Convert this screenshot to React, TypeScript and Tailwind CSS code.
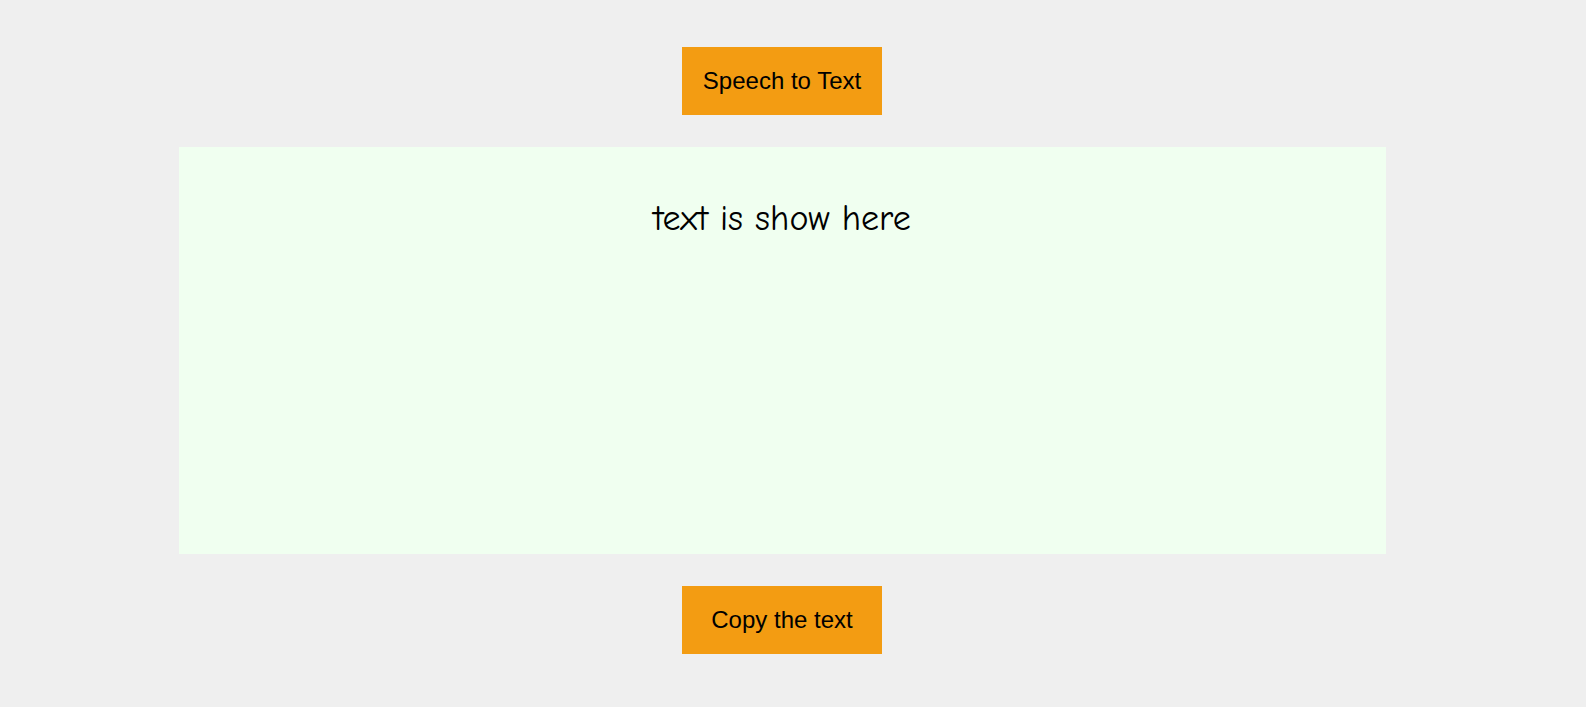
export default function App() {
  return (
    <div className="min-h-[730px] bg-[#efefef] pt-[47px] pb-[60px] pr-[22px]" style={{ fontFamily: '"Liberation Sans", Arial, sans-serif' }}>
      <div className="flex flex-col items-center">
        <button className="h-[68px] w-[200px] bg-[#f39c12] text-[24px] text-black">
          Speech to Text
        </button>
        <div className="mt-[32px] h-[407px] w-[1207px] bg-[#f0fff0] pt-[48px] text-center">
          <p
            className="text-[36px] leading-[48px] text-black"
            style={{ fontFamily: '"Comic Sans MS", "Comic Neue", "Open Sans", cursive' }}
          >
            text is show here
          </p>
        </div>
        <button className="mt-[32px] h-[68px] w-[200px] bg-[#f39c12] text-[24px] text-black">
          Copy the text
        </button>
      </div>
    </div>
  );
}
